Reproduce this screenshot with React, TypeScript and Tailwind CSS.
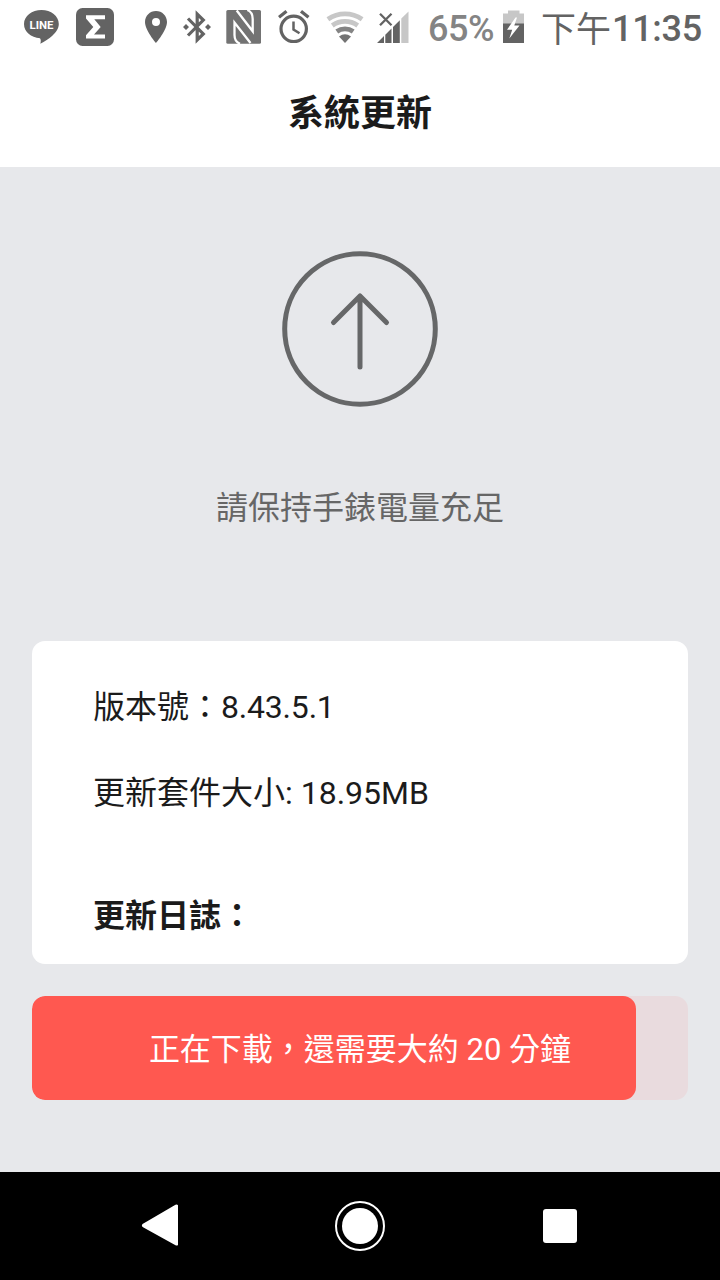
import React from 'react';

const LineIcon = () => (
  <svg width="36" height="38" viewBox="0 0 36 38" className="shrink-0">
    <path
      d="M17.500 2C27 2 34.800 8 34.800 16c0 5-3.200 8.600-6.500 11.700-3.300 3.100-7.600 5.500-12 8 .6-2 .8-4.100-.3-5.500C7 29.500 0 24 0 16 0 8 8 2 17.500 2Z"
      fill="#636363"
    />
    <text
      x="17.500"
      y="21.200"
      textAnchor="middle"
      fill="#fff"
      textLength="24"
      lengthAdjust="spacingAndGlyphs"
      className="font-['Roboto',sans-serif] text-[11.500px] font-bold"
    >
      LINE
    </text>
  </svg>
);

const SigmaIcon = () => (
  <svg width="38" height="38" viewBox="0 0 38 38" className="shrink-0">
    <rect width="38" height="38" rx="6.500" fill="#636363" />
    <path d="M10 7.300H29V11.300H18.300L24.700 18.900 18 26.500H29V30.500H10V27.200L17.300 18.900 10 10.600Z" fill="#fff" />
  </svg>
);

const PinIcon = () => (
  <svg width="22" height="38" viewBox="0 0 22 38" className="shrink-0">
    <path
      fillRule="evenodd"
      d="M11 3C4.900 3 0 7.900 0 14c0 8.300 11 21 11 21s11-12.700 11-21C22 7.900 17.100 3 11 3Zm0 15a4 4 0 1 1 0-8 4 4 0 0 1 0 8Z"
      fill="#636363"
    />
  </svg>
);

const BluetoothIcon = () => (
  <svg width="28" height="38" viewBox="0 0 28 38" className="shrink-0">
    <path d="M5 10.500 20.300 26 14.200 32V6l6.100 6L5 27.500" fill="none" stroke="#636363" strokeWidth="3.200" />
    <path d="m3 16 3 3-3 3-3-3ZM25 16l3 3-3 3-3-3Z" fill="#636363" />
  </svg>
);

const NfcIcon = () => (
  <svg width="36" height="38" viewBox="0 0 36 38" className="shrink-0">
    <rect x="0.300" y="2" width="34.700" height="33.700" rx="1.500" fill="#737373" />
    <g fill="none" stroke="#fff" strokeWidth="2.300">
      <path d="M14 35.800C9.800 34.300 8.500 31 8.500 27V14.500L24.500 35" />
      <path d="M21.300 2C25.500 3.500 26.700 7 26.700 11V23.300L10.700 2.500" />
    </g>
  </svg>
);

const AlarmIcon = () => (
  <svg width="32" height="38" viewBox="0 0 32 38" className="shrink-0" fill="none" stroke="#636363">
    <circle cx="15.700" cy="20.800" r="12.700" strokeWidth="3.200" />
    <path d="m1 9.300 7.500-6M30.500 9.300l-7.500-6" strokeWidth="3.300" />
    <path d="M15.500 13.500v8l6 3.800" strokeWidth="2.500" />
  </svg>
);

const WifiIcon = () => (
  <svg width="38" height="38" viewBox="0 0 38 38" className="shrink-0" fill="none">
    <path d="M1.900 11.200a30 30 0 0 1 34.200 0" stroke="#c7c7c7" strokeWidth="4.800" />
    <path d="M6.300 17.500a22 22 0 0 1 25.400 0" stroke="#c7c7c7" strokeWidth="4.800" />
    <path d="M10.800 23.500a14 14 0 0 1 16.400 0" stroke="#848484" strokeWidth="4.800" />
    <path d="M13 28.500a10 10 0 0 1 12 0L19 35Z" fill="#737373" />
  </svg>
);

const SignalIcon = () => (
  <svg width="32" height="38" viewBox="0 0 32 38" className="shrink-0">
    <path d="M0 35 7 28V35ZM8.300 26.700 14.500 20.500V35H8.300ZM16 19 22.800 12.200V35H16Z" fill="#636363" />
    <path d="M24.300 10.500 31.500 3.500V35H24.300Z" fill="#c7c7c7" />
    <path d="m3 5.800 11.500 11.500M14.500 5.800 3 17.300" stroke="#636363" strokeWidth="2.300" />
  </svg>
);

const BatteryIcon = () => (
  <svg width="22" height="38" viewBox="0 0 22 38" className="shrink-0">
    <path d="M5 2.500h11.500v3H21V16H0V5.500h5Z" fill="#c7c7c7" />
    <path d="M0 15.500h21V35H0Z" fill="#636363" />
    <path d="M12.500 9.500 4 21.700h5.200L6.300 30.500 16.500 17.500H11.300L14 9.500Z" fill="#fff" />
  </svg>
);

const StatusBar = () => (
  <div className="flex h-[54px] items-center pl-6 text-[#636363]">
    <LineIcon />
    <div className="ml-4 flex"><SigmaIcon /></div>
    <div className="ml-[31px] flex"><PinIcon /></div>
    <div className="ml-4 flex"><BluetoothIcon /></div>
    <div className="ml-[15px] flex"><NfcIcon /></div>
    <div className="ml-4 flex"><AlarmIcon /></div>
    <div className="ml-4 flex"><WifiIcon /></div>
    <div className="ml-[13px] flex"><SignalIcon /></div>
    <span className="ml-[19px] w-[66px] whitespace-nowrap pt-1 text-[36px] leading-[54px] font-medium tracking-[-0.5px] text-[#848484]">65%</span>
    <div className="ml-[9px] flex"><BatteryIcon /></div>
    <div className="ml-4 flex items-center whitespace-nowrap pt-1 text-[36px] leading-[54px]">
      <span className="w-[71px] pt-[3px] text-[35px]">下午</span>
      <span className="font-medium tracking-[-0.3px]">11:35</span>
    </div>
  </div>
);

const NavBar = () => (
  <div className="flex h-[108px] items-center justify-between bg-black pr-[143px] pl-[140px]">
    <svg width="38" height="44" viewBox="0 0 38 44">
      <path d="M4 21.500 36.500 2.500v37Z" fill="#fff" stroke="#fff" strokeWidth="4" strokeLinejoin="round" />
    </svg>
    <div className="mr-px flex h-[50px] w-[50px] items-center justify-center rounded-full border-2 border-white">
      <div className="h-9 w-9 rounded-full bg-white" />
    </div>
    <div className="h-[34px] w-[34px] rounded-[3px] bg-white" />
  </div>
);

export default function App() {
  const progress = 92;

  return (
    <div
      lang="zh-TW"
      className="flex h-[1280px] w-[720px] flex-col overflow-hidden bg-[#e7e8eb] font-['Roboto','Noto_Sans_CJK_TC',sans-serif] text-[#1b1b1b]"
    >
      <header className="h-[167px] bg-white">
        <StatusBar />
        <h1 className="pt-1 text-center text-[36px] leading-[113px] font-bold">系統更新</h1>
      </header>

      <main className="flex flex-1 flex-col px-8">
        <div className="flex flex-col items-center pt-[84px]">
          <svg width="156" height="156" viewBox="0 0 156 156" fill="none" stroke="#666768" strokeWidth="5">
            <circle cx="78" cy="78" r="75.300" />
            <path d="M78 116V45M51.500 71.500 78 45l26.500 26.500" strokeLinecap="round" strokeLinejoin="round" />
          </svg>
          <p className="mt-[77px] text-[32px] leading-12 text-[#666]">請保持手錶電量充足</p>
        </div>

        {/* Version card */}
        <div className="mt-[109px] h-[323px] rounded-[13px] bg-white pt-[42px] pl-[61px] text-[32px] leading-12">
          <p>版本號：<span className="tracking-[-0.2px]">8.43.5.1</span></p>
          <p className="mt-[38px]">更新套件大小: 18.95MB</p>
          <p className="mt-[75px] font-bold">更新日誌：</p>
        </div>

        {/* Download progress */}
        <div className="relative mt-8 h-[104px] overflow-hidden rounded-[13px] bg-[#e9dbde]">
          <div className="h-full rounded-[13px] bg-[#ff5850]" style={{ width: `${progress}%` }} />
          <span className="absolute inset-0 flex items-center justify-center pt-1 text-[31px] text-white">
            正在下載，還需要大約 20 分鐘
          </span>
        </div>
      </main>

      <NavBar />
    </div>
  );
}
